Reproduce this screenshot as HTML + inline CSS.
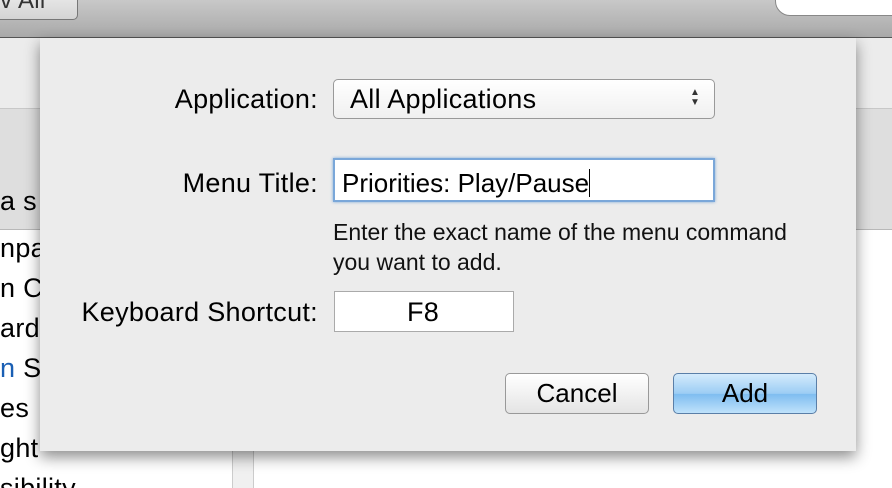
<!DOCTYPE html>
<html style="overflow:hidden;height:488px"><head><style>
body{margin:0;width:892px;height:488px;overflow:hidden;position:relative;font-family:"Liberation Sans",sans-serif;background:#fff}
.a{position:absolute}
.t{font-size:27px;letter-spacing:0.3px;color:#000;white-space:nowrap;line-height:30px}
</style></head><body>
<div class="a" style="left:0;top:0;width:892px;height:37px;background:linear-gradient(#c8c8c8,#a9a9a9)"></div>
<div class="a" style="left:0;top:37px;width:892px;height:1px;background:#555"></div>
<div class="a" style="left:-10px;top:-12px;width:86px;height:30px;border:1px solid #777;border-radius:5px;background:linear-gradient(#eee,#d4d4d4)"></div>
<div class="a t" style="left:0;top:-14px;font-size:24px;color:#333">v All</div>
<div class="a" style="left:775px;top:-16px;width:140px;height:30px;border:1px solid #888;border-radius:15px;background:#fff"></div>
<div class="a" style="left:0;top:38px;width:892px;height:70px;background:#ececec"></div>
<div class="a" style="left:0;top:108px;width:892px;height:120px;background:#dedede;border-top:1px solid #c8c8c8;border-bottom:1px solid #b8b8b8"></div>
<div class="a t" style="left:0;top:186px">a s</div>
<div class="a" style="left:0;top:228px;height:260px;overflow:hidden;width:240px">
<div class="t" style="line-height:40px;margin-top:0">npa<br>n C<br>ard<br><span style="color:#1a5fb4">n</span> Sh<br>es<br>ght<br>sibility</div></div>
<div class="a" style="left:232px;top:228px;width:20px;height:260px;background:#f0f0f0;border-left:1px solid #ccc;border-right:1px solid #ccc"></div>
<div class="a" style="left:40px;top:38px;width:816px;height:413px;background:#ececec;box-shadow:0 6px 14px rgba(0,0,0,.45)"></div>
<div class="a t" style="right:574px;top:84px">Application:</div>
<div class="a" style="left:333px;top:79px;width:380px;height:38px;border:1px solid #999;border-radius:5px;background:linear-gradient(#fff,#f0f0f0)"></div>
<div class="a t" style="left:350px;top:84px">All Applications</div>
<div class="a" style="left:690px;top:88px;font-size:10px;line-height:10px;color:#333">▲<br>▼</div>
<div class="a t" style="right:574px;top:168px">Menu Title:</div>
<div class="a" style="left:333px;top:158px;width:378px;height:40px;border:2px solid #7aa7d9;box-shadow:0 0 3px #7aa7d9;background:#fff"></div>
<div class="a t" style="left:342px;top:168px;font-size:26px;letter-spacing:0">Priorities: Play/Pause<span style="display:inline-block;width:1px;height:28px;background:#000;vertical-align:-5px"></span></div>
<div class="a" style="left:333px;top:217px;font-size:23px;line-height:30px;color:#111;white-space:nowrap">Enter the exact name of the menu command<br>you want to add.</div>
<div class="a t" style="right:574px;top:297px">Keyboard Shortcut:</div>
<div class="a" style="left:334px;top:291px;width:178px;height:39px;border:1px solid #aaa;background:#fff"></div>
<div class="a t" style="left:334px;width:178px;text-align:center;top:297px">F8</div>
<div class="a" style="left:505px;top:373px;width:142px;height:39px;border:1px solid #999;border-radius:5px;background:linear-gradient(#fff,#e4e4e4);text-align:center;line-height:39px;font-size:26px">Cancel</div>
<div class="a" style="left:673px;top:373px;width:142px;height:39px;border:1px solid #5a7fa8;border-radius:5px;background:linear-gradient(#d4ebfc,#9ccdf4 50%,#7fbdf0 52%,#bfe2fb);text-align:center;line-height:39px;font-size:26px">Add</div>
</body></html>
